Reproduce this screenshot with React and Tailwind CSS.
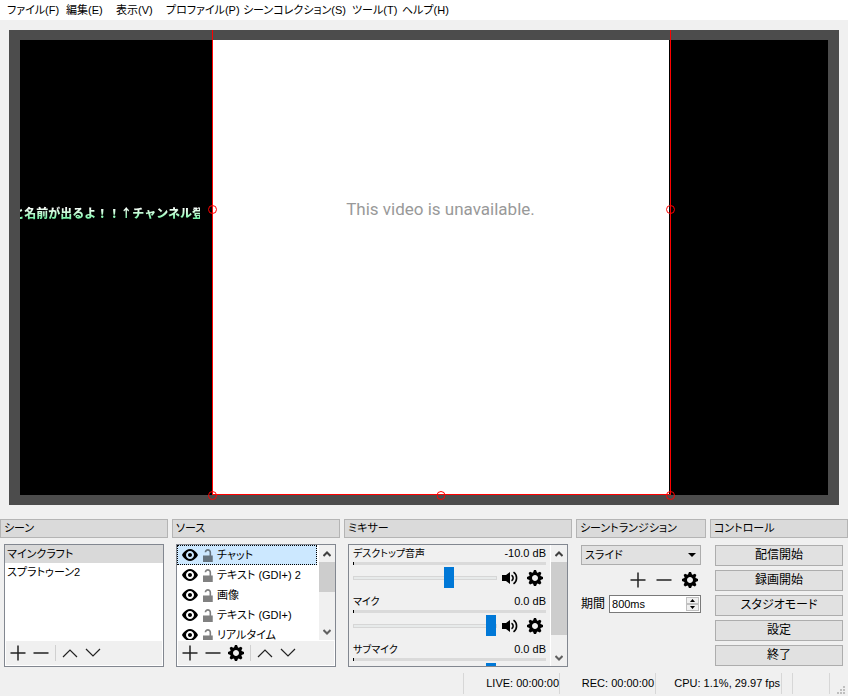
import React, { useState } from 'react';

const ICONS = {
  cog: 'M3.5 0l-.5 1.19c-.1.03-.19.08-.28.13l-1.19-.5-.72.72.5 1.19c-.05.1-.09.18-.13.28l-1.19.5v1l1.19.5c.04.1.08.18.13.28l-.5 1.19.72.72 1.19-.5c.09.04.18.09.28.13l.5 1.19h1l.5-1.19c.09-.04.19-.08.28-.13l1.19.5.72-.72-.5-1.19c.04-.09.09-.19.13-.28l1.19-.5v-1l-1.19-.5c-.03-.09-.08-.19-.13-.28l.5-1.19-.72-.72-1.19.5c-.09-.04-.19-.09-.28-.13l-.5-1.19h-1zm.5 2.5c.83 0 1.5.67 1.5 1.5s-.67 1.5-1.5 1.5-1.5-.67-1.5-1.5.67-1.5 1.5-1.5z',
  eye: 'M4.03 1c-2.53 0-4.03 3-4.03 3s1.5 3 4.03 3c2.47 0 3.97-3 3.97-3s-1.5-3-3.97-3zm-.03 1c1.11 0 2 .9 2 2 0 1.11-.89 2-2 2-1.1 0-2-.89-2-2 0-1.1.9-2 2-2zm0 1c-.55 0-1 .45-1 1s.45 1 1 1 1-.45 1-1-.45-1-1-1z',
  unlocked: 'M3 0c-1.1 0-2 .9-2 2h1c0-.56.44-1 1-1s1 .44 1 1v2h-4v4h6v-4h-1v-2c0-1.1-.9-2-2-2z',
};

const Icon = ({ name, className }) => (
  <svg viewBox="0 0 8 8" className={className} fill="currentColor">
    <path d={ICONS[name]} />
  </svg>
);

const SpeakerIcon = () => (
  <svg viewBox="0 0 16 16" className="h-4 w-4" fill="none" stroke="#000" strokeWidth="1.6">
    <path d="M0 5h4l4-3v12l-4-3H0z" fill="#000" stroke="none" />
    <path d="M9.5 5.2a3.2 3.2 0 0 1 0 5.6" />
    <path d="M11.5 2.2a7 7 0 0 1 0 11.6" />
  </svg>
);

const LineIcon = ({ d, width = 1.5 }) => (
  <svg viewBox="0 0 16 16" className="h-4 w-4" fill="none" stroke="#222" strokeWidth={width}>
    <path d={d} />
  </svg>
);

const PLUS = 'M8 0.5v15M0.5 8h15';
const MINUS = 'M0.5 8h15';
const UP = 'M1 12L8 5l7 7';
const DOWN = 'M1 4l7 7 7-7';

const ToolButton = ({ label, children }) => (
  <button type="button" aria-label={label} className="flex h-4 w-4 items-center justify-center">
    {children}
  </button>
);

const Dock = ({ title, children }) => (
  <section className="flex min-w-0 flex-col gap-1.5">
    <h2 className="flex h-[19px] items-center border border-[#b4b4b4] bg-[#dadada] px-[3px] text-[11px]">{title}</h2>
    <div className="px-1">{children}</div>
  </section>
);

const ScrollBar = ({ thumb }) => (
  <div className="flex w-4 shrink-0 flex-col bg-[#f0f0f0]">
    <button type="button" aria-label="上へ" className="flex h-[17px] shrink-0 items-center justify-center">
      <svg viewBox="0 0 8 6" className="h-1.5 w-2" fill="none" stroke="#404040" strokeWidth="2">
        <path d="M.5 5L4 1.5 7.5 5" />
      </svg>
    </button>
    <div className="grow">
      <div className={`bg-[#cdcdcd] ${thumb}`} />
    </div>
    <button type="button" aria-label="下へ" className="flex h-[17px] shrink-0 items-center justify-center">
      <svg viewBox="0 0 8 6" className="h-1.5 w-2" fill="none" stroke="#606060" strokeWidth="2">
        <path d="M.5 1L4 4.5 7.5 1" />
      </svg>
    </button>
  </div>
);

const menus = ['ファイル(F)', '編集(E)', '表示(V)', 'プロファイル(P)', 'シーンコレクション(S)', 'ツール(T)', 'ヘルプ(H)'];
const scenes = ['マインクラフト', 'スプラトゥーン2'];
const sources = ['チャット', 'テキスト (GDI+) 2', '画像', 'テキスト (GDI+)', 'リアルタイム'];
const channels = [
  { name: 'デスクトップ音声', db: '-10.0 dB', value: 68 },
  { name: 'マイク', db: '0.0 dB', value: 100 },
  { name: 'サブマイク', db: '0.0 dB', value: 100 },
];
const controls = ['配信開始', '録画開始', 'スタジオモード', '設定', '終了'];

const Handle = ({ className }) => (
  <svg viewBox="0 0 9 9" className={`absolute h-[9px] w-[9px] ${className}`} fill="none" stroke="#f00">
    <circle cx="4.5" cy="4.5" r="4" />
  </svg>
);

const Preview = () => (
  <div className="mx-[9px] mt-2.5 bg-[#4c4c4c] px-[11px] py-2.5">
    <div className="grid aspect-[808/455] grid-cols-[192fr_457fr_159fr] bg-black">
      <div className="flex items-start overflow-hidden pr-3">
        <p className="mt-[164px] flex w-full justify-end overflow-hidden bg-linear-to-b from-white from-20% to-[#50f098] to-90% bg-clip-text font-['Noto_Sans_CJK_JP',sans-serif] text-xs leading-[18px] font-black whitespace-nowrap text-transparent [font-feature-settings:normal]">
          <span className="-mr-1">と名前が出るよ！！↑チャンネル登</span>
        </p>
      </div>
      <div className="relative flex justify-center bg-white">
        <p className="mt-[157px] font-[Roboto] text-[17px] leading-6 text-[#999]">This video is unavailable.</p>
        <div className="absolute -top-2.5 -right-0.5 bottom-0 left-0 border-x border-b border-[#f00]" />
        <Handle className="top-[165px] -left-1" />
        <Handle className="top-[165px] -right-1.5" />
        <Handle className="-bottom-[5px] -left-1" />
        <Handle className="-bottom-[5px] left-1/2 -translate-x-1/2" />
        <Handle className="-right-1.5 -bottom-[5px]" />
      </div>
    </div>
  </div>
);

const ScenesDock = () => (
  <Dock title="シーン">
    <div className="flex h-[123px] flex-col border border-[#828790] bg-white">
      <ul className="grow text-[11px]">
        {scenes.map((scene, i) => (
          <li key={scene} className={`h-[18px] px-0.5 leading-[18px] ${i === 0 ? 'bg-[#d9d9d9]' : ''}`}>
            {scene}
          </li>
        ))}
      </ul>
      <div className="m-px flex h-6 items-center gap-[7px] bg-[#f0f0f0] px-1">
        <ToolButton label="追加"><LineIcon d={PLUS} /></ToolButton>
        <ToolButton label="削除"><LineIcon d={MINUS} /></ToolButton>
        <span className="-mx-px h-4 w-px bg-[#d0d0d0]" />
        <ToolButton label="上へ移動"><LineIcon d={UP} width={1.2} /></ToolButton>
        <ToolButton label="下へ移動"><LineIcon d={DOWN} width={1.2} /></ToolButton>
      </div>
    </div>
  </Dock>
);

const SourcesDock = () => (
  <Dock title="ソース">
    <div className="flex h-[123px] flex-col border border-[#828790] bg-white">
      <div className="flex min-h-0 grow">
        <ul className="mr-0.5 min-w-0 grow overflow-hidden text-[11px]">
          {sources.map((source, i) => (
            <li
              key={source}
              className={`flex h-5 items-center gap-[5px] border border-dotted px-1 leading-4 whitespace-nowrap ${i === 0 ? 'border-black bg-[#cce8ff]' : 'border-transparent'}`}
            >
              <Icon name="eye" className="h-4 w-4 shrink-0" />
              <Icon name="unlocked" className={`-mr-1 h-[13px] w-[13px] shrink-0 ${i === 0 ? 'text-[#66747f]' : 'text-[#808080]'}`} />
              {source}
            </li>
          ))}
        </ul>
        <ScrollBar thumb="h-[30px]" />
      </div>
      <div className="m-px flex h-6 shrink-0 items-center gap-[7px] bg-[#f0f0f0] px-1">
        <ToolButton label="追加"><LineIcon d={PLUS} /></ToolButton>
        <ToolButton label="削除"><LineIcon d={MINUS} /></ToolButton>
        <ToolButton label="プロパティ"><Icon name="cog" className="h-4 w-4" /></ToolButton>
        <span className="-mx-px h-4 w-px bg-[#d0d0d0]" />
        <ToolButton label="上へ移動"><LineIcon d={UP} width={1.2} /></ToolButton>
        <ToolButton label="下へ移動"><LineIcon d={DOWN} width={1.2} /></ToolButton>
      </div>
    </div>
  </Dock>
);

const MixerDock = () => {
  const [levels, setLevels] = useState(channels.map((c) => c.value));

  return (
    <Dock title="ミキサー">
      <div className="flex h-[123px] overflow-hidden border border-[#828790]">
        <div className="min-w-0 grow px-1">
          {channels.map((channel, i) => (
            <div key={channel.name} className="h-12">
              <div className="flex h-[17px] justify-between leading-[17px]">
                <label htmlFor={`vol-${i}`} className="text-[10px]">{channel.name}</label>
                <span className="text-[11px]">{channel.db}</span>
              </div>
              <div className="h-[3px] border-l border-black bg-[#dadada]" />
              <div className="flex h-[26px] items-center">
                <input
                  id={`vol-${i}`}
                  type="range"
                  value={levels[i]}
                  onChange={(e) => setLevels(levels.map((v, j) => (j === i ? Number(e.target.value) : v)))}
                  className="h-[21px] min-w-0 grow appearance-none bg-transparent [&::-webkit-slider-runnable-track]:h-1 [&::-webkit-slider-runnable-track]:border [&::-webkit-slider-runnable-track]:border-[#d6d6d6] [&::-webkit-slider-runnable-track]:bg-[#e7eaea] [&::-webkit-slider-thumb]:-mt-2.5 [&::-webkit-slider-thumb]:h-[21px] [&::-webkit-slider-thumb]:w-2.5 [&::-webkit-slider-thumb]:appearance-none [&::-webkit-slider-thumb]:bg-[#0078d7]"
                />
                <button type="button" aria-label="ミュート" className="ml-[5px]">
                  <SpeakerIcon />
                </button>
                <button type="button" aria-label="設定" className="mr-[3px] ml-[9px]">
                  <Icon name="cog" className="h-4 w-4" />
                </button>
              </div>
            </div>
          ))}
        </div>
        <div className="flex border-l border-white">
          <ScrollBar thumb="h-[73px]" />
        </div>
      </div>
    </Dock>
  );
};

const TransitionDock = () => (
  <Dock title="シーントランジション">
    <div className="flex flex-col px-px pt-px text-[11px]">
      <div className="relative">
        <select aria-label="シーントランジション" className="h-5 w-full appearance-none border border-[#adadad] bg-[#e1e1e1] px-[3px] leading-[18px]">
          <option>スライド</option>
        </select>
        <svg viewBox="0 0 8 4" className="pointer-events-none absolute top-2 right-[5px] h-1 w-2">
          <path d="M0 0h8L4 4z" />
        </svg>
      </div>
      <div className="flex h-[30px] items-center justify-end gap-2.5 pr-[3px]">
        <ToolButton label="追加"><LineIcon d={PLUS} /></ToolButton>
        <ToolButton label="削除"><LineIcon d={MINUS} /></ToolButton>
        <ToolButton label="プロパティ"><Icon name="cog" className="h-4 w-4" /></ToolButton>
      </div>
      <div className="flex items-center gap-1">
        <label htmlFor="duration" className="shrink-0 text-xs">期間</label>
        <div className="flex h-[18px] min-w-0 grow border border-[#7a7a7a] bg-white">
          <input id="duration" type="text" defaultValue="800ms" className="min-w-0 grow px-0.5 outline-none" />
          <div className="m-px flex w-[13px] shrink-0 flex-col bg-[#f0f0f0]">
            <button type="button" aria-label="増やす" className="flex grow items-center justify-center border border-[#c0c0c0]">
              <svg viewBox="0 0 5 3" className="h-[3px] w-[5px]"><path d="M0 3h5L2.5 0z" /></svg>
            </button>
            <button type="button" aria-label="減らす" className="flex grow items-center justify-center border border-[#c0c0c0]">
              <svg viewBox="0 0 5 3" className="h-[3px] w-[5px]"><path d="M0 0h5L2.5 3z" /></svg>
            </button>
          </div>
        </div>
      </div>
    </div>
  </Dock>
);

const ControlsDock = () => (
  <Dock title="コントロール">
    <div className="flex flex-col gap-1 px-px pt-px">
      {controls.map((label) => (
        <button key={label} type="button" className="h-[21px] border border-[#adadad] bg-[#e1e1e1] text-xs leading-[19px]">
          {label}
        </button>
      ))}
    </div>
  </Dock>
);

const StatusBar = () => (
  <footer className="mt-1.5 flex h-[21px] justify-end text-right text-[11px] leading-[21px] whitespace-nowrap">
    <div className="w-[97px] border-x border-[#d7d7d7]">LIVE: 00:00:00</div>
    <div className="w-24 border-r border-[#d7d7d7] pr-px">REC: 00:00:00</div>
    <div className="w-[126px] border-r border-[#d7d7d7] pr-px">CPU: 1.1%, 29.97 fps</div>
    <div className="w-[11px] border-r border-[#d7d7d7]" />
    <div className="w-[37px] border-r border-[#d7d7d7]" />
    <div className="flex w-[18px] items-end justify-end pr-[3px]">
      <svg viewBox="0 0 8 8" className="h-2 w-2" fill="#bfbfbf">
        <path d="M6 0h2v2h-2zM3 3h2v2h-2zM6 3h2v2h-2zM0 6h2v2h-2zM3 6h2v2h-2zM6 6h2v2h-2z" />
      </svg>
    </div>
  </footer>
);

export default function App() {
  return (
    <div lang="ja" className="flex min-h-screen flex-col bg-[#f0f0f0] font-['Liberation_Sans','Noto_Sans_CJK_JP',sans-serif] text-black [font-feature-settings:'palt']">
      <nav className="grid h-5 grid-cols-[59px_50px_50px_77px_109px_50px_auto] items-center bg-white px-[7px] text-[11px]">
        {menus.map((menu) => (
          <button key={menu} type="button" className="text-left whitespace-nowrap">{menu}</button>
        ))}
      </nav>
      <Preview />
      <main className="mt-3.5 grid grid-cols-[168fr_168fr_228fr_130fr_138fr] gap-1">
        <ScenesDock />
        <SourcesDock />
        <MixerDock />
        <TransitionDock />
        <ControlsDock />
      </main>
      <StatusBar />
    </div>
  );
}
